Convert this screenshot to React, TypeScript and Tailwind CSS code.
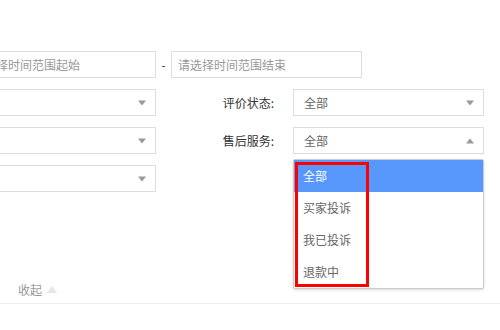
import React from 'react';

const font = { fontFamily: '"Noto Sans CJK SC", "Noto Sans", sans-serif' };

function Arrow({ up = false }: { up?: boolean }) {
  return (
    <span
      className={
        up
          ? 'absolute right-[9px] top-1/2 -translate-y-1/2 w-0 h-0 border-x-[4px] border-x-transparent border-b-[5px] border-b-[#999]'
          : 'absolute right-[9px] top-1/2 -translate-y-1/2 w-0 h-0 border-x-[4px] border-x-transparent border-t-[5px] border-t-[#999]'
      }
    />
  );
}

function Select({ value = '', up = false }: { value?: string; up?: boolean }) {
  return (
    <div className="relative w-[191px] h-[27px] border border-[#ddd] bg-white flex items-center pl-[10px] text-[12px] text-[#666]">
      {value}
      <Arrow up={up} />
    </div>
  );
}

const options = ['全部', '买家投诉', '我已投诉', '退款中'];

export default function App() {
  const [selected] = React.useState(0);

  return (
    <div className="w-[500px] h-[330px] bg-white overflow-hidden relative" style={font}>
      <div className="-ml-[35px] pt-[51px] flex flex-col gap-[11px]">
        <div className="flex items-center">
          <div className="w-[191px] h-[27px] border border-[#ddd] flex items-center pl-[6px] text-[12px] text-[#999]">
            请选择时间范围起始
          </div>
          <span className="w-[15px] text-center text-[12px] text-[#333]">-</span>
          <div className="w-[191px] h-[27px] border border-[#ddd] flex items-center pl-[6px] text-[12px] text-[#999]">
            请选择时间范围结束
          </div>
        </div>

        <div className="flex items-center">
          <Select />
          <div className="w-[137px] pr-[19px] text-right text-[12px] text-[#333]">评价状态:</div>
          <Select value="全部" />
        </div>

        <div className="flex items-center">
          <Select />
          <div className="w-[137px] pr-[19px] text-right text-[12px] text-[#333]">售后服务:</div>
          <div className="relative">
            <Select value="全部" up />
            <div className="absolute left-0 top-[32px] w-[191px] bg-white border border-[#ccc] rounded-[2px] shadow-[0_1px_3px_rgba(0,0,0,0.15)] z-10">
              {options.map((o, i) => (
                <div
                  key={o}
                  className={
                    i === selected
                      ? 'h-[32px] flex items-center pl-[9px] text-[12px] bg-[#5897fb] text-white'
                      : 'h-[32px] flex items-center pl-[9px] text-[12px] text-[#666]'
                  }
                >
                  {o}
                </div>
              ))}
              <div className="absolute left-[1px] top-[2px] w-[74px] h-[125px] border-[3px] border-[#ff0000] pointer-events-none" />
            </div>
          </div>
        </div>

        <div className="flex items-center">
          <Select />
        </div>
      </div>

      <div className="mt-[84px] pl-[18px] h-[28px] flex items-center gap-[5px] border-b border-[#eee] text-[12px] text-[#999]">
        收起
        <span className="w-0 h-0 border-x-[5px] border-x-transparent border-b-[7px] border-b-[#e6e6e6]" />
      </div>
    </div>
  );
}
